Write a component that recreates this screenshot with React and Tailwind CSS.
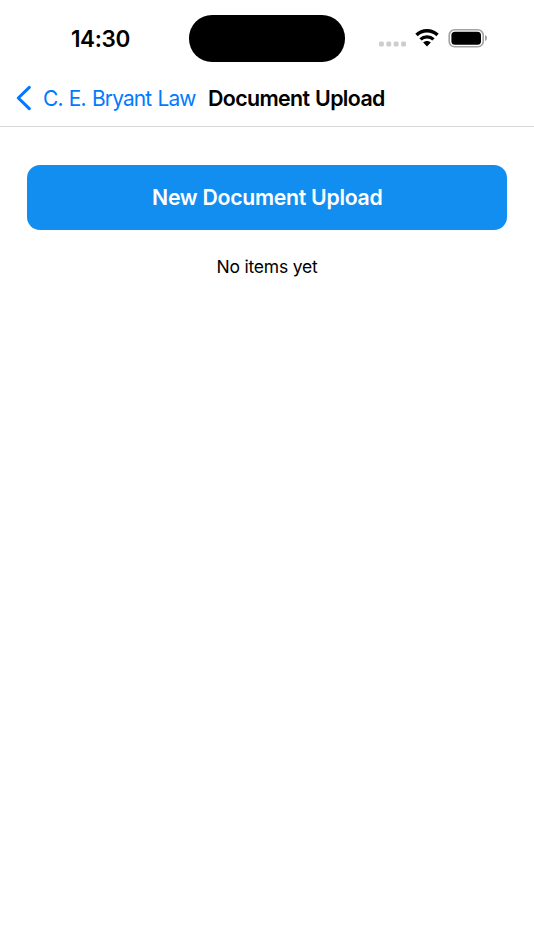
import React from 'react';

const SignalDots = () => (
    <svg className="block h-[6px] w-[28px]" viewBox="0 0 28 6" fill="#cdcdcd" aria-hidden="true">
        <rect x="1" y="0.5" width="4.9" height="5" rx="1.6" />
        <rect x="8.3" y="0.5" width="4.9" height="5" rx="1.6" />
        <rect x="15.7" y="0.5" width="4.9" height="5" rx="1.6" />
        <rect x="23.1" y="0.5" width="4.9" height="5" rx="1.6" />
    </svg>
);

const WifiIcon = () => (
    <svg className="block h-[18px] w-[24px]" viewBox="0 0 24 18" fill="none" stroke="#000" aria-hidden="true">
        <path d="M1.5 6.1C7.3 0.4 16.7 0.4 22.5 6.1" strokeWidth="3.5" />
        <path d="M5.5 10.4C9.1 6.9 14.9 6.9 18.5 10.4" strokeWidth="3.3" />
        <path d="M8.2 13.5C10.3 11.5 13.7 11.5 15.8 13.5L12 17.4Z" fill="#000" stroke="none" />
    </svg>
);

const BatteryIcon = () => (
    <svg className="block h-[19px] w-[40px]" viewBox="0 0 40 19" fill="none" aria-hidden="true">
        <rect x="1.2" y="0.8" width="34" height="17" rx="5.4" stroke="#a3a3a3" strokeWidth="1.6" />
        <rect x="3.4" y="2.8" width="29.6" height="13" rx="3.6" fill="#000" />
        <path d="M37 6.1C38.3 6.6 39.1 7.7 39.1 9.1C39.1 10.5 38.3 11.6 37 12.1Z" fill="#a3a3a3" />
    </svg>
);

const StatusBar = () => (
    <div className="flex h-[70px] items-start bg-white pt-[14.5px]">
        <div className="flex h-[48.5px] w-[189px] items-center pl-[71px] text-[22.5px] font-semibold tracking-[-0.4px] text-black">
            14:30
        </div>
        <div className="h-[47.5px] w-[156px] rounded-[23px] bg-black" />
        <div className="flex h-[47.5px] items-center pl-[33px]">
            <div className="mt-[11px]">
                <SignalDots />
            </div>
            <div className="ml-[9px]">
                <WifiIcon />
            </div>
            <div className="ml-[9px]">
                <BatteryIcon />
            </div>
        </div>
    </div>
);

const NavBar = () => (
    <div className="flex h-[57px] items-center whitespace-nowrap border-b border-[#d8d8d8] bg-white pl-[16px] leading-none">
        <button className="flex items-center text-[#007aff]">
            <svg className="block h-[26px] w-[16px]" viewBox="0 0 16 26" fill="none" stroke="currentColor" strokeWidth="3.1" strokeLinecap="round" strokeLinejoin="round" aria-hidden="true">
                <path d="M13.3 2.3L2.3 13L13.3 23.7" />
            </svg>
            <span className="ml-[11px] w-[154px] origin-left scale-x-[0.95] text-left text-[22px] tracking-[-0.9px] [word-spacing:1.3px]">C. E. Bryant Law</span>
        </button>
        <h1 className="ml-[11px] origin-left scale-x-[0.972] text-[22px] font-semibold tracking-[-0.65px] text-black [word-spacing:0.8px]">Document Upload</h1>
    </div>
);

const App = () => {
    return (
        <div className="min-h-screen bg-white font-['Inter','Liberation_Sans',sans-serif]">
            <StatusBar />
            <NavBar />
            <main className="flex flex-col items-center px-[27px] pt-[38px]">
                <button className="h-[64.5px] w-full rounded-[13px] bg-[#118eef] text-[22px] font-semibold tracking-[-0.3px] text-white">
                    <span className="inline-block scale-x-[0.966]">New Document Upload</span>
                </button>
                <p className="mt-[24px] text-[17.5px] leading-[26px] tracking-[-0.2px] text-black">No items yet</p>
            </main>
        </div>
    );
};

export default App;
